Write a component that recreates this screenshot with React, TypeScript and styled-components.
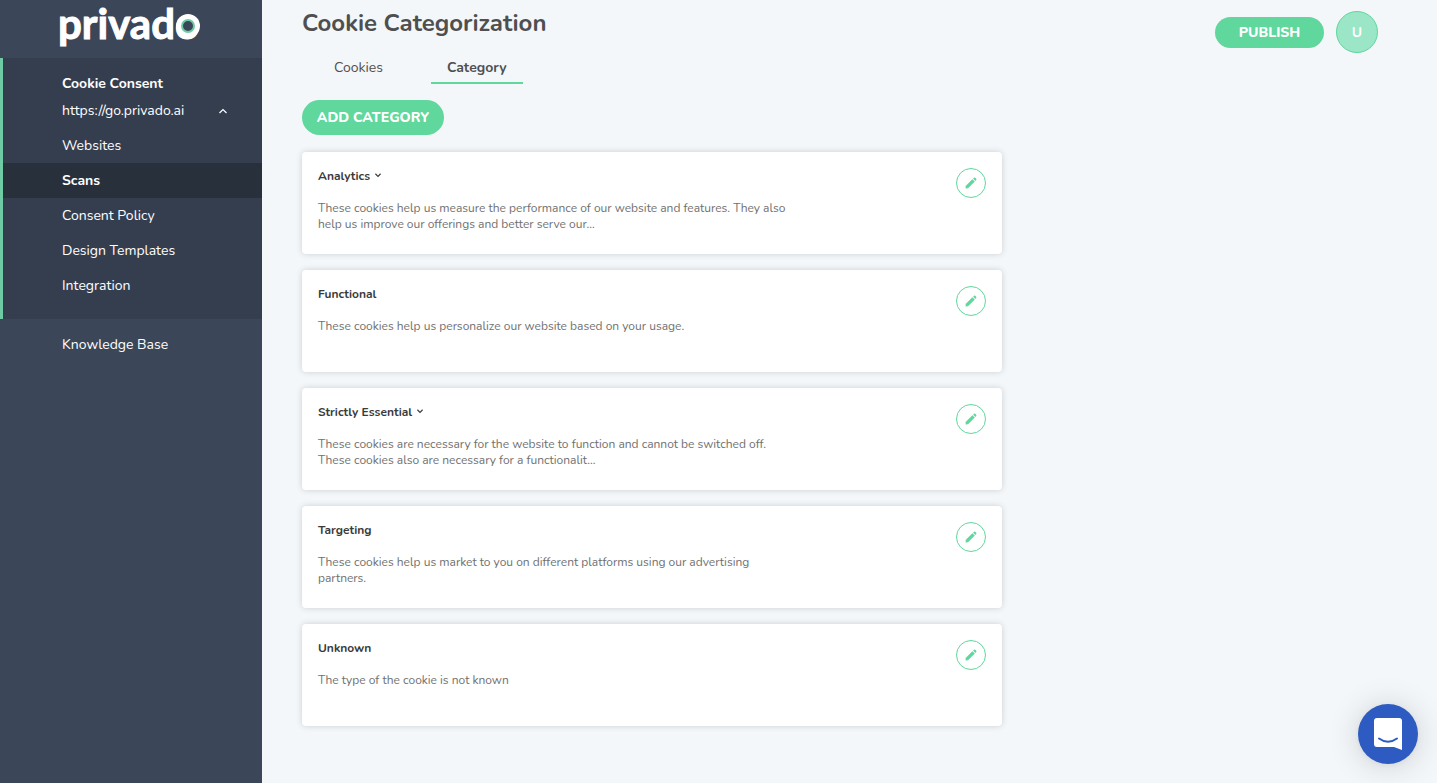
import React from "react";
import styled, { createGlobalStyle } from "styled-components";

const GlobalStyle = createGlobalStyle`
  *, *::before, *::after { box-sizing: border-box; }
  body {
    margin: 0;
    background: #f3f7fa;
    color: #4f4f4f;
    font-family: "Nunito", "Lato", "Noto Sans", sans-serif;
    font-size: 14px;
    line-height: 20px;
  }
  h1, h2, p, ul { margin: 0; padding: 0; }
  ul { list-style: none; }
  button { font-family: inherit; cursor: pointer; }
`;

const Page = styled.div`
  display: flex;
  min-height: 100vh;
`;

const Sidebar = styled.aside`
  flex: 0 0 262px;
  background: #3b4658;
  color: #fff;
`;

const Logo = styled.a`
  display: block;
  height: 58px;
  padding-left: 58px;
  color: #fff;
  font-family: "Lato", sans-serif;
  font-size: 42px;
  font-weight: 700;
  line-height: 46px;
  text-decoration: none;
  -webkit-text-stroke: 1px #fff;
`;

const LogoWord = styled.span`
  position: relative;
`;

const LogoRing = styled.svg`
  position: absolute;
  right: -2px;
  bottom: 9px;
  width: 26px;
  height: 26px;
`;

const Section = styled.section`
  padding: 17px 0 16px;
  border-left: 3px solid #6fcba4;
  background: #353e4f;
`;

const SectionTitle = styled.h2`
  padding: 0 59px;
  font-size: 14px;
  font-weight: 700;
  line-height: 18px;
`;

const SiteButton = styled.button`
  display: flex;
  align-items: center;
  justify-content: space-between;
  width: 100%;
  height: 35px;
  padding: 0 35px 0 59px;
  border: 0;
  background: none;
  color: inherit;
  font-size: 14px;
`;

const NavLink = styled.a<{ $active?: boolean }>`
  display: block;
  padding: 0 59px;
  background: ${(p) => (p.$active ? "#27303b" : "transparent")};
  color: #fff;
  font-weight: ${(p) => (p.$active ? 700 : 400)};
  line-height: 35px;
  text-decoration: none;
`;

const BaseLink = styled(NavLink)`
  margin: 8px 0 0 3px;
`;

const Main = styled.main`
  flex: 1;
  min-width: 0;
  padding: 8px 59px 40px 40px;
`;

const Header = styled.header`
  display: flex;
  justify-content: space-between;
  height: 44px;
`;

const Title = styled.h1`
  font-size: 24px;
  font-weight: 700;
  line-height: 30px;
`;

const Actions = styled.div`
  display: flex;
  align-items: center;
  gap: 12px;
  height: 48px;
`;

const PillButton = styled.button<{ $small?: boolean }>`
  height: ${(p) => (p.$small ? 31 : 35)}px;
  min-width: ${(p) => (p.$small ? 109 : 142)}px;
  padding: 0;
  border: 0;
  border-radius: 18px;
  background: #60d79c;
  color: #fff;
  font-size: 14px;
  font-weight: 800;
  white-space: nowrap;
`;

const Avatar = styled.button`
  width: 42px;
  height: 42px;
  padding: 0;
  border: 1px solid #60d79c;
  border-radius: 50%;
  background: #9ae6c6;
  color: #fff;
  font-size: 14px;
  font-weight: 700;
`;

const Tabs = styled.nav`
  display: flex;
  gap: 32px;
  margin: 0 16px 16px;
`;

const Tab = styled.a<{ $active?: boolean }>`
  padding: 2px 16px 0;
  border-bottom: 2px solid ${(p) => (p.$active ? "#60d79c" : "transparent")};
  color: #4f4f4f;
  font-weight: ${(p) => (p.$active ? 700 : 400)};
  line-height: 28px;
  text-decoration: none;
`;

const CardList = styled.ul`
  display: grid;
  gap: 16px;
  max-width: 700px;
  margin-top: 17px;
`;

const Card = styled.li`
  display: flex;
  justify-content: space-between;
  min-height: 102px;
  padding: 16px;
  border-radius: 4px;
  background: #fff;
  box-shadow: 0 0 6px rgba(0, 0, 0, 0.16);
`;

const CardText = styled.div`
  width: 70%;
`;

const CardTitle = styled.h2`
  display: flex;
  align-items: center;
  gap: 5px;
  margin-bottom: 16px;
  color: #3a3a3a;
  font-size: 12px;
  font-weight: 700;
  line-height: 16px;
`;

const Description = styled.p`
  color: #707070;
  font-size: 12px;
  line-height: 16px;
`;

const EditButton = styled.button`
  display: flex;
  align-items: center;
  justify-content: center;
  width: 30px;
  height: 30px;
  padding: 0;
  border: 1px solid #60d79c;
  border-radius: 50%;
  background: #fff;
`;

const ChatButton = styled.button`
  position: fixed;
  right: 19px;
  bottom: 19px;
  width: 60px;
  height: 60px;
  padding: 0;
  border: 0;
  border-radius: 50%;
  background: #2d5bc1;
  box-shadow: 0 1px 6px rgba(0, 0, 0, 0.06), 0 2px 32px rgba(0, 0, 0, 0.16);
`;

const Chevron = ({ up = false, size = 6 }: { up?: boolean; size?: number }) => (
  <svg width={size} height={size} viewBox="0 0 8 8" fill="none" stroke="currentColor" strokeWidth={up ? 1.2 : 1.6} aria-hidden="true">
    <path d={up ? "M0.5 6L4 2.5L7.5 6" : "M0.5 1L4 4.5L7.5 1"} />
  </svg>
);

const Pencil = () => (
  <svg width="12" height="12" viewBox="0 0 12 12" fill="#60d79c" aria-hidden="true">
    <path d="M0.6 8.9L7.4 2.3L9.8 4.6L3.1 11.3L0.6 11.5Z" />
    <path d="M8.1 1.7L9 0.8Q9.7 0.3 10.3 0.8L11.2 1.7Q11.7 2.4 11.2 3.1L10.4 3.9Z" />
  </svg>
);

const navItems = ["Websites", "Scans", "Consent Policy", "Design Templates", "Integration"];

const categories = [
  {
    name: "Analytics",
    expandable: true,
    lines: [
      "These cookies help us measure the performance of our website and features. They also",
      "help us improve our offerings and better serve our...",
    ],
  },
  { name: "Functional", lines: ["These cookies help us personalize our website based on your usage."] },
  {
    name: "Strictly Essential",
    expandable: true,
    lines: [
      "These cookies are necessary for the website to function and cannot be switched off.",
      "These cookies also are necessary for a functionalit...",
    ],
  },
  {
    name: "Targeting",
    lines: ["These cookies help us market to you on different platforms using our advertising", "partners."],
  },
  { name: "Unknown", lines: ["The type of the cookie is not known"] },
];

export default function App() {
  return (
    <>
      <GlobalStyle />
      <Page>
        <Sidebar>
          <Logo href="#">
            <LogoWord>
              privado
              <LogoRing viewBox="0 0 26 26" aria-hidden="true">
                <circle cx="13" cy="13" r="12" fill="#fff" />
                <circle cx="13" cy="13" r="6" fill="#3b4658" stroke="#6fcba4" strokeWidth="2" />
              </LogoRing>
            </LogoWord>
          </Logo>
          <Section>
            <SectionTitle>Cookie Consent</SectionTitle>
            <SiteButton type="button" aria-expanded="true">
              https://go.privado.ai
              <Chevron up size={8} />
            </SiteButton>
            <nav>
              {navItems.map((item) => (
                <NavLink key={item} href="#" $active={item === "Scans"}>
                  {item}
                </NavLink>
              ))}
            </nav>
          </Section>
          <BaseLink href="#">Knowledge Base</BaseLink>
        </Sidebar>
        <Main>
          <Header>
            <Title>Cookie Categorization</Title>
            <Actions>
              <PillButton type="button" $small>PUBLISH</PillButton>
              <Avatar type="button">U</Avatar>
            </Actions>
          </Header>
          <Tabs>
            <Tab href="#">Cookies</Tab>
            <Tab href="#" $active>Category</Tab>
          </Tabs>
          <PillButton type="button">ADD CATEGORY</PillButton>
          <CardList>
            {categories.map(({ name, expandable, lines }) => (
              <Card key={name}>
                <CardText>
                  <CardTitle>
                    {name}
                    {expandable && <Chevron />}
                  </CardTitle>
                  <Description>
                    {lines.map((line, i) => (
                      <React.Fragment key={line}>
                        {i > 0 && <br />}
                        {line}
                      </React.Fragment>
                    ))}
                  </Description>
                </CardText>
                <EditButton type="button" aria-label={`Edit ${name}`}>
                  <Pencil />
                </EditButton>
              </Card>
            ))}
          </CardList>
        </Main>
      </Page>
      <ChatButton type="button" aria-label="Open chat">
        <svg width="60" height="60" viewBox="0 0 60 60" aria-hidden="true">
          <path d="M19 14H41Q44 14 44 17V46L36 43H19Q16 43 16 40V17Q16 14 19 14Z" fill="#fff" />
          <path d="M21 34.5Q30 41 39 34.5" fill="none" stroke="#2d5bc1" strokeWidth="2" strokeLinecap="round" />
        </svg>
      </ChatButton>
    </>
  );
}
